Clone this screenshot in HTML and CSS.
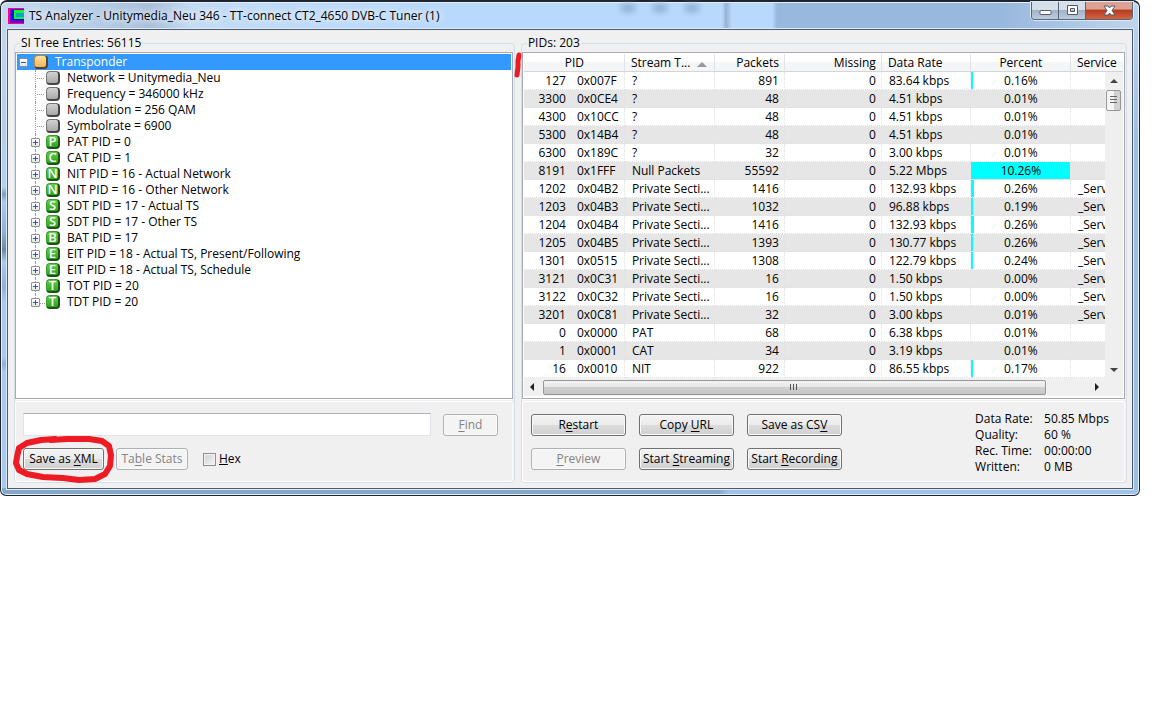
FILE: index.html
```
<!DOCTYPE html>
<html lang="en">
<head>
    <meta charset="utf-8">
    <title>TS Analyzer</title>
    <link rel="stylesheet" href="styles.css">
</head>

<body>

<div class="window">
    <header class="titlebar">
        <svg class="app-icon" width="16" height="16" viewBox="0 0 16 16" shape-rendering="crispEdges">
            <rect width="16" height="16" fill="#ff0090"/>
            <rect x="2" y="1" width="14" height="14" fill="#6a00c8"/>
            <rect x="3" y="2" width="13" height="10" fill="#1c00ff"/>
            <rect x="6" y="2" width="10" height="9" fill="#00ff20"/>
            <rect x="8" y="5" width="8" height="4" fill="#10a0d0"/>
        </svg>
        <h1 class="title">TS Analyzer - Unitymedia_Neu 346 - TT-connect CT2_4650 DVB-C Tuner (1)</h1>
        <div class="ghost">
            <i></i><i></i><i></i>
        </div>
        <div class="caption-buttons">
            <button class="caption" aria-label="Minimize">
                <svg width="13" height="13" viewBox="0 0 13 13"><rect x="1" y="6.5" width="11" height="4" rx="1" fill="#fff" stroke="#555b6b"/></svg>
            </button>
            <button class="caption" aria-label="Maximize">
                <svg width="13" height="13" viewBox="0 0 13 13"><path d="M1.5 1.5h10v9h-10z M4.5 4.5v3h4v-3z" fill="#fff" fill-rule="evenodd" stroke="#555b6b"/></svg>
            </button>
            <button class="caption close" aria-label="Close">
                <svg width="13" height="13" viewBox="0 0 13 13"><path d="M1 2h4l1.500 2L8 2h4L9 6.500l3 4.500H8L6.500 9 5 11H1l3-4.500z" fill="#fff" stroke="#555b6b"/></svg>
            </button>
        </div>
    </header>

    <main class="client">
        <fieldset class="group">
            <legend>SI Tree Entries: 56115</legend>
            <ul class="tree">
                <li class="root"><button class="toggle minus" aria-label="Collapse"></button><span class="icon orange"></span>Transponder</li>
                <li class="leaf"><span class="icon"></span>Network = Unitymedia_Neu</li>
                <li class="leaf"><span class="icon"></span>Frequency = 346000 kHz</li>
                <li class="leaf"><span class="icon"></span>Modulation = 256 QAM</li>
                <li class="leaf"><span class="icon"></span>Symbolrate = 6900</li>
                <li><button class="toggle" aria-label="Expand"></button><span class="icon green">P</span>PAT PID = 0</li>
                <li><button class="toggle" aria-label="Expand"></button><span class="icon green">C</span>CAT PID = 1</li>
                <li><button class="toggle" aria-label="Expand"></button><span class="icon green">N</span>NIT PID = 16 - Actual Network</li>
                <li><button class="toggle" aria-label="Expand"></button><span class="icon green">N</span>NIT PID = 16 - Other Network</li>
                <li><button class="toggle" aria-label="Expand"></button><span class="icon green">S</span>SDT PID = 17 - Actual TS</li>
                <li><button class="toggle" aria-label="Expand"></button><span class="icon green">S</span>SDT PID = 17 - Other TS</li>
                <li><button class="toggle" aria-label="Expand"></button><span class="icon green">B</span>BAT PID = 17</li>
                <li><button class="toggle" aria-label="Expand"></button><span class="icon green">E</span>EIT PID = 18 - Actual TS, Present/Following</li>
                <li><button class="toggle" aria-label="Expand"></button><span class="icon green">E</span>EIT PID = 18 - Actual TS, Schedule</li>
                <li><button class="toggle" aria-label="Expand"></button><span class="icon green">T</span>TOT PID = 20</li>
                <li><button class="toggle" aria-label="Expand"></button><span class="icon green">T</span>TDT PID = 20</li>
            </ul>
            <div class="panel search-panel">
                <div class="line">
                    <input type="text" class="search" aria-label="Search">
                    <button class="button find" disabled><u>F</u>ind</button>
                </div>
                <div class="line second">
                    <div class="marked">
                        <button class="button xml">Save as <u>X</u>ML</button>
                        <svg class="ring" width="102" height="48" viewBox="0 0 102 48" fill="none" stroke="#ed1c24" stroke-width="6" stroke-linejoin="round" stroke-linecap="round">
                            <path d="M42 4L28 5 14 8 6 13 4 22 3 28 6 35 14 39 30 42 50 43 66 45 82 44 92 39 97 31 98 20 96 11 89 6 76 4 54 4 38 5"/>
                        </svg>
                    </div>
                    <button class="button stats" disabled>Ta<u>b</u>le Stats</button>
                    <label class="check"><input type="checkbox"><span><u>H</u>ex</span></label>
                </div>
            </div>
        </fieldset>

        <fieldset class="group">
            <legend>PIDs: 203</legend>
            <svg class="mark" width="8" height="26" viewBox="0 0 8 26" fill="none" stroke="#ed1c24" stroke-width="5" stroke-linecap="round"><path d="M5 3L4 9 4 15 3 23"/></svg>
            <div class="list">
                <table>
                    <colgroup>
                        <col class="c-pid"><col class="c-type"><col class="c-packets"><col class="c-missing"><col class="c-rate"><col class="c-percent"><col>
                    </colgroup>
                    <thead>
                        <tr><th class="mid">PID</th><th class="sorted">Stream T...</th><th class="num">Packets</th><th class="num">Missing</th><th>Data Rate</th><th class="mid">Percent</th><th>Service</th></tr>
                    </thead>
                    <tbody>
                        <tr><td><b>127</b>0x007F</td><td>?</td><td>891</td><td>0</td><td>83.64 kbps</td><td style="--bar: 2%">0.16%</td><td></td></tr>
                        <tr><td><b>3300</b>0x0CE4</td><td>?</td><td>48</td><td>0</td><td>4.51 kbps</td><td>0.01%</td><td></td></tr>
                        <tr><td><b>4300</b>0x10CC</td><td>?</td><td>48</td><td>0</td><td>4.51 kbps</td><td>0.01%</td><td></td></tr>
                        <tr><td><b>5300</b>0x14B4</td><td>?</td><td>48</td><td>0</td><td>4.51 kbps</td><td>0.01%</td><td></td></tr>
                        <tr><td><b>6300</b>0x189C</td><td>?</td><td>32</td><td>0</td><td>3.00 kbps</td><td>0.01%</td><td></td></tr>
                        <tr><td><b>8191</b>0x1FFF</td><td>Null Packets</td><td>55592</td><td>0</td><td>5.22 Mbps</td><td style="--bar: 100%">10.26%</td><td></td></tr>
                        <tr><td><b>1202</b>0x04B2</td><td>Private Secti...</td><td>1416</td><td>0</td><td>132.93 kbps</td><td style="--bar: 3%">0.26%</td><td>_Serv</td></tr>
                        <tr><td><b>1203</b>0x04B3</td><td>Private Secti...</td><td>1032</td><td>0</td><td>96.88 kbps</td><td style="--bar: 2%">0.19%</td><td>_Serv</td></tr>
                        <tr><td><b>1204</b>0x04B4</td><td>Private Secti...</td><td>1416</td><td>0</td><td>132.93 kbps</td><td style="--bar: 3%">0.26%</td><td>_Serv</td></tr>
                        <tr><td><b>1205</b>0x04B5</td><td>Private Secti...</td><td>1393</td><td>0</td><td>130.77 kbps</td><td style="--bar: 2%">0.26%</td><td>_Serv</td></tr>
                        <tr><td><b>1301</b>0x0515</td><td>Private Secti...</td><td>1308</td><td>0</td><td>122.79 kbps</td><td style="--bar: 2%">0.24%</td><td>_Serv</td></tr>
                        <tr><td><b>3121</b>0x0C31</td><td>Private Secti...</td><td>16</td><td>0</td><td>1.50 kbps</td><td>0.00%</td><td>_Serv</td></tr>
                        <tr><td><b>3122</b>0x0C32</td><td>Private Secti...</td><td>16</td><td>0</td><td>1.50 kbps</td><td>0.00%</td><td>_Serv</td></tr>
                        <tr><td><b>3201</b>0x0C81</td><td>Private Secti...</td><td>32</td><td>0</td><td>3.00 kbps</td><td>0.01%</td><td>_Serv</td></tr>
                        <tr><td><b>0</b>0x0000</td><td>PAT</td><td>68</td><td>0</td><td>6.38 kbps</td><td>0.01%</td><td></td></tr>
                        <tr><td><b>1</b>0x0001</td><td>CAT</td><td>34</td><td>0</td><td>3.19 kbps</td><td>0.01%</td><td></td></tr>
                        <tr><td><b>16</b>0x0010</td><td>NIT</td><td>922</td><td>0</td><td>86.55 kbps</td><td style="--bar: 2%">0.17%</td><td></td></tr>
                    </tbody>
                </table>
                <div class="vscroll">
                    <button class="arrow up" aria-label="Scroll up"></button>
                    <div class="thumb"></div>
                    <button class="arrow down" aria-label="Scroll down"></button>
                </div>
                <div class="hscroll">
                    <button class="arrow left" aria-label="Scroll left"></button>
                    <div class="track"><div class="thumb"></div></div>
                    <button class="arrow right" aria-label="Scroll right"></button>
                </div>
            </div>
            <div class="panel pid-panel">
                <div class="commands">
                    <button class="button">R<u>e</u>start</button>
                    <button class="button">Copy <u>U</u>RL</button>
                    <button class="button">Save as CS<u>V</u></button>
                    <button class="button" disabled><u>P</u>review</button>
                    <button class="button">Start <u>S</u>treaming</button>
                    <button class="button">Start <u>R</u>ecording</button>
                </div>
                <dl class="stats-list">
                    <dt>Data Rate:</dt><dd>50.85 Mbps</dd>
                    <dt>Quality:</dt><dd>60 %</dd>
                    <dt>Rec. Time:</dt><dd>00:00:00</dd>
                    <dt>Written:</dt><dd>0 MB</dd>
                </dl>
            </div>
        </fieldset>
    </main>
</div>

</body>
</html>
```
FILE: styles.css
```
* {
    box-sizing: border-box;
}

body {
    margin: 0 12px 0 0;
    background: #fff;
    color: #000;
    font: 12px/16px 'Open Sans', 'Noto Sans', sans-serif;
}

button, input {
    margin: 0;
    padding: 0;
    font: inherit;
    color: inherit;
}

.window {
    padding: 0 6px 6px;
    border: 1px solid #20242e;
    border-top-width: 2px;
    border-radius: 7px 7px 6px 6px;
    box-shadow: inset 0 0 0 1px #e3f1ff;
    background:
        linear-gradient(to right, #c3d9f0, #b4cce6 100px, #a9c0da 150px, #c3dcf5 190px, #b9d9fc 420px 721px, #96b3d4 725px, #b9d9fc 731px 771px, #98b8de 776px 1000px, #c0d5ec) top / 100% 28px no-repeat,
        linear-gradient(to right, #85a7c8 0 718px, #9fc2ea 728px) bottom / 100% 7px no-repeat,
        linear-gradient(#c3d9f0, #b4cce6 140px, #b0d0f4 145px 185px, #7f9dbd 192px, #a8caee 200px, #8fb0d4 230px, #71869f 248px, #a8caee 260px, #8fb0d4 285px, #a8caee 300px 355px, #8fb0d4 362px, #a8caee 370px) left / 50% 100% no-repeat,
        linear-gradient(#c0d5ec, #9dbfe7 140px);
}

/* title bar */

.titlebar {
    position: relative;
    display: flex;
    align-items: center;
    height: 27px;
}

.app-icon {
    margin-left: 1px;
}

.title {
    margin: 0 auto 0 5px;
    font-size: 12px;
    font-weight: normal;
    text-shadow: 0 0 6px #fff, 0 0 8px #fff;
}

.ghost {
    position: absolute;
    left: 602px;
    top: 0;
    display: flex;
    gap: 18px;
    padding: 2px 12px 5px;
    opacity: 0.7;
    filter: blur(3px);
}

.ghost i {
    width: 14px;
    height: 8px;
    background: #7f9dbf;
}

.caption-buttons {
    display: flex;
    align-self: flex-start;
    height: 18px;
    border: 1px solid #56657a;
    border-top: 0;
    border-radius: 0 0 4px 4px;
    box-shadow: 0 0 0 1px #dce9f7;
    overflow: hidden;
}

.caption {
    display: flex;
    justify-content: center;
    align-items: center;
    width: 27px;
    border: 0;
    border-right: 1px solid #56657a;
    background: linear-gradient(#d5dfea 0 45%, #a3b3c6 50%, #bccbdd);
}

.caption.close {
    width: 46px;
    border-right: 0;
    background: linear-gradient(#dca193 0 40%, #b83c22 50%, #d3643f);
}

/* client area */

.client {
    display: grid;
    grid-template-columns: 500fr 605fr;
    gap: 6px;
    padding: 5px 5px 5px 6px;
    border: 1px solid #4c5c6e;
    box-shadow: 0 0 0 1px #dceafa;
    background: #f0f0f0;
}

.group {
    position: relative;
    display: flex;
    flex-direction: column;
    min-width: 0;
    margin: 0;
    padding: 0 1px 0 0;
    border: 1px solid #d5dfe8;
    border-radius: 4px;
}

.group legend {
    margin-left: 5px;
    padding: 0 1px;
}

.tree,
.list {
    flex: 1;
    margin: 1px 0 0;
    padding: 1px 1px 2px;
    border: 1px solid #a5aab5;
    background: #fff;
    box-shadow: 0 1px #fff;
}

/* tree */

.tree {
    list-style: none;
}

.tree li {
    position: relative;
    display: flex;
    align-items: center;
    height: 16px;
    padding-left: 14px;
}

.tree li::before {
    content: '';
    position: absolute;
    left: 18px;
    top: 0;
    width: 9px;
    height: 9px;
    border-left: 1px dotted #9a9a9a;
    border-bottom: 1px dotted #9a9a9a;
}

.tree li:not(:last-child)::before {
    height: 16px;
    border-bottom: 0;
}

.tree .leaf {
    padding-left: 29px;
}

.tree .leaf::after {
    content: '';
    position: absolute;
    left: 20px;
    top: 8px;
    width: 7px;
    border-top: 1px dotted #9a9a9a;
}

.tree .root {
    padding-left: 2px;
    background: #3399ff;
    color: #fff;
}

.tree .root::before {
    display: none;
}

.toggle {
    position: relative;
    width: 9px;
    height: 9px;
    margin-right: 6px;
    border: 1px solid #919191;
    border-radius: 1px;
    background:
        linear-gradient(#3b55a5, #3b55a5) center / 5px 1px no-repeat,
        linear-gradient(#3b55a5, #3b55a5) center / 1px 5px no-repeat,
        linear-gradient(#fff, #e4e4e4);
}

.toggle.minus {
    background:
        linear-gradient(#3b55a5, #3b55a5) center / 5px 1px no-repeat,
        linear-gradient(#fff, #e4e4e4);
}

.icon {
    width: 14px;
    height: 14px;
    margin-right: 7px;
    border: 1px solid #777;
    border-right: 2px solid #444;
    border-bottom: 2px solid #444;
    border-radius: 4px;
    background: linear-gradient(#d2d2d2, #a9a9a9);
    color: #fff;
    font-size: 13px;
    font-weight: 600;
    line-height: 11px;
    text-align: center;
}

.icon.orange {
    border-color: #b58a45 #54442c #54442c #b58a45;
    background: linear-gradient(#ffe09a, #efb45c);
}

.icon.green {
    border-color: #3f9d2f #1f4f1a #1f4f1a #3f9d2f;
    background: linear-gradient(#62cf47, #2aa51c);
}

/* lower panels */

.panel {
    height: 81px;
    margin-top: 2px;
    border: 1px solid #fff;
    border-right-color: #fafafa;
    border-radius: 3px;
}

.search-panel {
    padding: 11px 14px 0 7px;
}

.line {
    display: flex;
    align-items: center;
}

.line.second {
    margin-top: 12px;
}

.search {
    flex: 1;
    min-width: 0;
    height: 23px;
    margin-right: 12px;
    border: 1px solid #e2e3ea;
    border-top-color: #abadb3;
    background: #fff;
}

.button {
    height: 22px;
    border: 1px solid #707070;
    border-radius: 3px;
    background: linear-gradient(#f3f3f3, #ebebeb 50%, #dddddd 50%, #cfcfcf);
    box-shadow: inset 0 0 0 1px #fafafa;
    line-height: 18px;
    white-space: nowrap;
}

.button u {
    text-underline-offset: 2px;
}

.button:disabled {
    border-color: #adb2b5;
    background: #f4f4f4;
    color: #838383;
}

.find {
    width: 55px;
}

.marked {
    position: relative;
    margin-right: 12px;
}

.xml {
    width: 81px;
}

.ring {
    position: absolute;
    left: -10px;
    top: -13px;
}

.stats {
    width: 72px;
    margin-right: 15px;
}

.check {
    display: flex;
    align-items: center;
    gap: 3px;
}

.check input {
    appearance: none;
    width: 13px;
    height: 13px;
    border: 1px solid #8e8f8f;
    background: linear-gradient(135deg, #cdd1d6, #f6f6f6);
    box-shadow: inset 0 0 0 1px #f4f4f4;
}

/* pid list */

.list {
    position: relative;
}

table {
    width: 100%;
    table-layout: fixed;
    border-collapse: separate;
    border-spacing: 0;
}

.c-pid { width: 101px; }
.c-type { width: 90px; }
.c-packets { width: 70px; }
.c-missing { width: 97px; }
.c-rate { width: 89px; }
.c-percent { width: 100px; }

th,
td {
    height: 18px;
    padding: 0 6px 0 7px;
    overflow: hidden;
    line-height: 16px;
    font-weight: normal;
    text-align: left;
    white-space: nowrap;
}

th {
    padding: 1px 5px 0 6px;
    border-right: 1px solid #dfe2e6;
    border-bottom: 1px solid #d5d5d5;
    background: linear-gradient(#fff 50%, #f4f5f6 50%);
}

th.mid {
    text-align: center;
}

th.num {
    text-align: right;
}

th:last-child {
    border-right: 0;
}

.sorted::after {
    content: '';
    display: inline-block;
    margin-left: 7px;
    border: 5px solid transparent;
    border-top: 0;
    border-bottom-color: #999;
}

td {
    border-right: 1px dotted #e2e2e2;
    border-bottom: 1px dotted #e2e2e2;
    background: linear-gradient(#00ffff, #00ffff) left / var(--bar, 0) 100% no-repeat;
}

tbody tr:nth-child(even) {
    background: #e6e6e6;
}

td:nth-child(1) {
    padding: 0;
}

td b {
    display: inline-block;
    width: 42px;
    margin-right: 11px;
    font-weight: normal;
    text-align: right;
}

td:nth-child(3),
td:nth-child(4) {
    padding-right: 5px;
    text-align: right;
}

td:nth-child(6) {
    text-align: center;
}

.arrow {
    display: flex;
    justify-content: center;
    align-items: center;
    width: 17px;
    height: 17px;
    border: 0;
    background: #f0f0f0;
}

.arrow::before {
    content: '';
    border: 4px solid transparent;
}

.up::before { border-top: 0; border-bottom-color: #444; }
.down::before { border-bottom: 0; border-top-color: #444; }
.left::before { border-left: 0; border-right-color: #222; }
.right::before { border-right: 0; border-left-color: #222; }

.vscroll {
    position: absolute;
    top: 19px;
    right: 1px;
    bottom: 20px;
    display: flex;
    flex-direction: column;
    width: 18px;
    background: #efefef;
}

.vscroll .down {
    margin-top: auto;
}

.thumb {
    border: 1px solid #979797;
    border-radius: 2px;
}

.vscroll .thumb {
    height: 21px;
    margin: 1px 2px 0 1px;
    background:
        repeating-linear-gradient(#666 0 1px, transparent 1px 3px) center / 7px 9px no-repeat,
        linear-gradient(to right, #f5f5f5 50%, #d2d2d2 50%);
}

.hscroll {
    display: flex;
    align-items: center;
    height: 18px;
    padding-right: 18px;
    background: #f0f0f0;
}

.track {
    flex: 1;
}

.hscroll .thumb {
    width: 92%;
    height: 15px;
    margin-left: 2px;
    background:
        repeating-linear-gradient(to right, #555 0 1px, transparent 1px 3px) center / 9px 6px no-repeat,
        linear-gradient(#f3f3f3, #e6e6e6 50%, #cfcfcf 50%, #c6c6c6);
}

.pid-panel {
    display: flex;
    justify-content: space-between;
    padding: 12px 15px 0 8px;
}

.commands {
    display: grid;
    grid-template-columns: repeat(3, 95px);
    gap: 12px 13px;
    align-content: start;
}

.stats-list {
    display: grid;
    grid-template-columns: 69px auto;
    align-content: start;
    margin: -3px 0 0;
}

.stats-list dd {
    margin: 0;
}

.mark {
    position: absolute;
    left: -8px;
    top: 1px;
    z-index: 1;
}
```
